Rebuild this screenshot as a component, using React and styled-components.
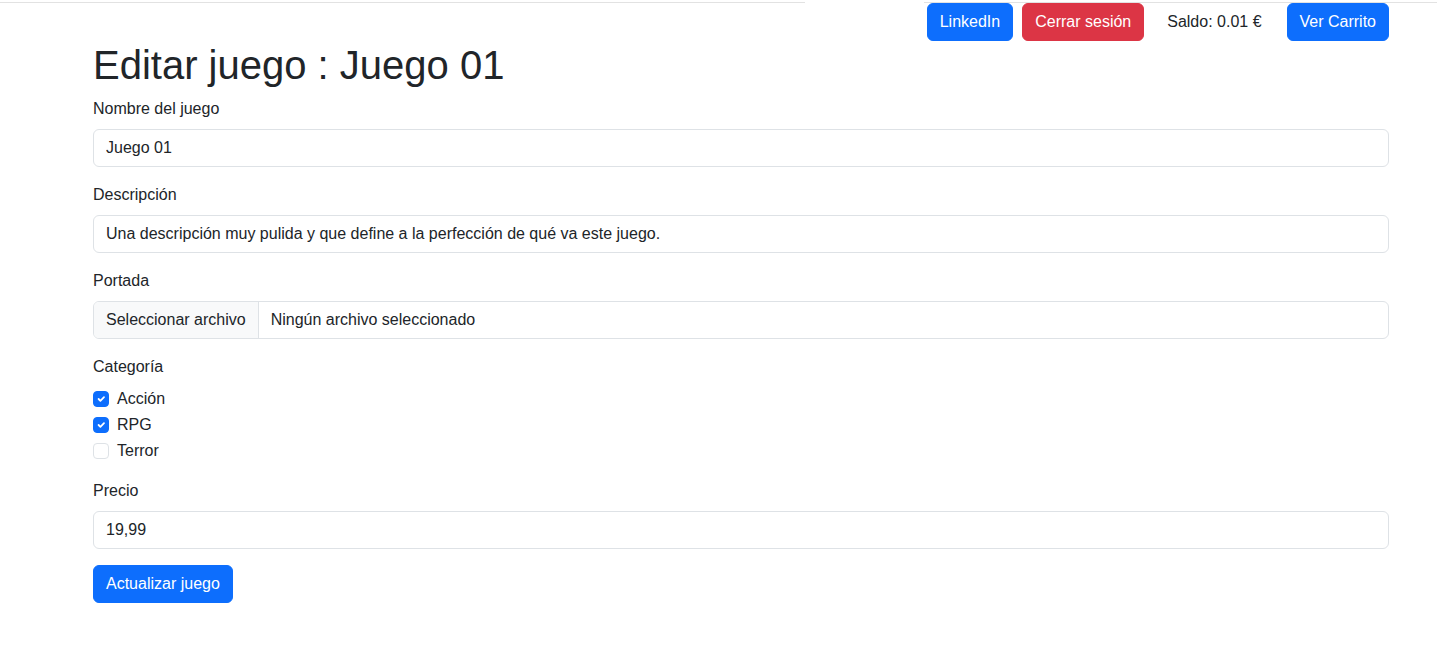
import React from "react";
import styled, { createGlobalStyle, css } from "styled-components";

const Global = createGlobalStyle`
  html, body { margin: 0; padding: 0; background: #fff; }
  body {
    font-family: "Liberation Sans", Arial, sans-serif;
    font-size: 16px;
    line-height: 1.5;
    color: #212529;
  }
  *, *::before, *::after { box-sizing: border-box; }
`;

const Page = styled.div`
  width: 1437px;
  min-height: 645px;
`;

const RuleRow = styled.div`
  display: flex;
  padding-top: 2px;
`;

const RuleSegment = styled.div`
  height: 1px;
  background: #e2e2e2;
  width: ${(p) => (p.$width ? `${p.$width}px` : "auto")};
  flex: ${(p) => (p.$width ? "none" : "1")};
  margin-left: ${(p) => p.$offset || 0}px;
`;

const Container = styled.div`
  width: 1296px;
  margin-left: 93px;
`;

const NavBar = styled.nav`
  display: flex;
  justify-content: flex-end;
  align-items: center;
  gap: 9px;
`;

const buttonBase = css`
  display: inline-block;
  font-family: inherit;
  font-size: 16px;
  line-height: 24px;
  padding: 6px 12px;
  border: 1px solid transparent;
  border-radius: 6px;
  color: #fff;
  cursor: pointer;
  text-decoration: none;
`;

const Button = styled.button`
  ${buttonBase}
  background: ${(p) => (p.$variant === "danger" ? "#dc3545" : "#0d6efd")};
  border-color: ${(p) => (p.$variant === "danger" ? "#dc3545" : "#0d6efd")};
`;

const Balance = styled.span`
  padding: 0 16px 0 14px;
  font-size: 16px;
  line-height: 24px;
  color: #212529;
`;

const Title = styled.h1`
  margin: 0 0 8px;
  font-size: 40px;
  font-weight: 500;
  line-height: 1.2;
`;

const Field = styled.div`
  margin-bottom: 16px;
`;

const Label = styled.label`
  display: block;
  margin-bottom: 8px;
  line-height: 24px;
`;

const Input = styled.input`
  display: block;
  width: 100%;
  padding: 6px 12px;
  font-family: inherit;
  font-size: 16px;
  line-height: 24px;
  color: #212529;
  background: #fff;
  border: 1px solid #dee2e6;
  border-radius: 6px;
  outline: none;
`;

const FileBox = styled.div`
  display: flex;
  align-items: stretch;
  width: 100%;
  border: 1px solid #dee2e6;
  border-radius: 6px;
  overflow: hidden;
  background: #fff;
`;

const FileButton = styled.span`
  padding: 6px 12px;
  line-height: 24px;
  background: #f8f9fa;
  border-right: 1px solid #dee2e6;
  color: #212529;
`;

const FileName = styled.span`
  padding: 6px 12px;
  line-height: 24px;
  color: #212529;
`;

const CheckList = styled.div`
  display: flex;
  flex-direction: column;
  gap: 2px;
`;

const Check = styled.label`
  display: flex;
  align-items: center;
  gap: 8px;
  line-height: 24px;
  min-height: 24px;
`;

const Box = styled.span`
  width: 16px;
  height: 16px;
  flex: none;
  border-radius: 4px;
  border: 1px solid ${(p) => (p.$checked ? "#0d6efd" : "#dee2e6")};
  background: ${(p) => (p.$checked ? "#0d6efd" : "#fff")};
  display: flex;
  align-items: center;
  justify-content: center;
`;

const CheckMark = () => (
  <svg width="12" height="12" viewBox="0 0 20 20">
    <path
      d="m6 10 3 3 6-6"
      fill="none"
      stroke="#fff"
      strokeWidth="3"
      strokeLinecap="round"
      strokeLinejoin="round"
    />
  </svg>
);

const categories = [
  { name: "Acción", checked: true },
  { name: "RPG", checked: true },
  { name: "Terror", checked: false },
];

export default function App() {
  return (
    <Page>
      <Global />
      <RuleRow>
        <RuleSegment $width={805} />
        <RuleSegment $offset={119} />
      </RuleRow>
      <Container>
        <NavBar>
          <Button>LinkedIn</Button>
          <Button $variant="danger">Cerrar sesión</Button>
          <Balance>Saldo: 0.01 €</Balance>
          <Button>Ver Carrito</Button>
        </NavBar>
        <Title>Editar juego : Juego 01</Title>
        <Field>
          <Label>Nombre del juego</Label>
          <Input defaultValue="Juego 01" />
        </Field>
        <Field>
          <Label>Descripción</Label>
          <Input defaultValue="Una descripción muy pulida y que define a la perfección de qué va este juego." />
        </Field>
        <Field>
          <Label>Portada</Label>
          <FileBox>
            <FileButton>Seleccionar archivo</FileButton>
            <FileName>Ningún archivo seleccionado</FileName>
          </FileBox>
        </Field>
        <Field>
          <Label>Categoría</Label>
          <CheckList>
            {categories.map((c) => (
              <Check key={c.name}>
                <Box $checked={c.checked}>{c.checked && <CheckMark />}</Box>
                {c.name}
              </Check>
            ))}
          </CheckList>
        </Field>
        <Field>
          <Label>Precio</Label>
          <Input defaultValue="19,99" />
        </Field>
        <Button>Actualizar juego</Button>
      </Container>
    </Page>
  );
}
